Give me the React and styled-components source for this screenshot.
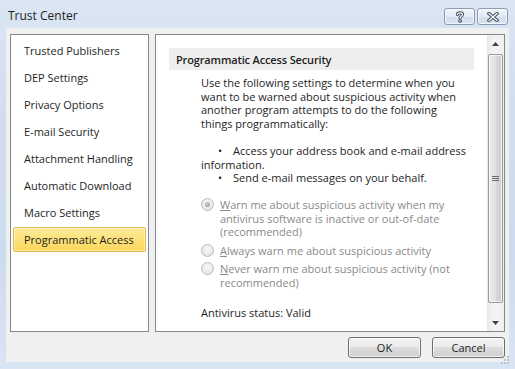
import React from 'react'
import styled, { createGlobalStyle } from 'styled-components'

const GlobalStyle = createGlobalStyle`
  html, body {
    margin: 0;
    padding: 0;
    background: #d3e0f0;
  }
  body {
    font-family: 'Open Sans', 'Noto Sans', sans-serif;
    font-size: 11px;
    color: #1e1e1e;
  }
`

const Window = styled.div`
  width: 515px;
  height: 369px;
  box-sizing: border-box;
  padding: 0 6px 7px 6px;
  display: flex;
  flex-direction: column;
  background: linear-gradient(180deg, #dae6f3 0%, #d1def0 30%, #cddbee 70%, #d9e5f3 100%);
`

const TitleBar = styled.div`
  height: 28px;
  display: flex;
  justify-content: space-between;
  align-items: flex-start;
  flex-shrink: 0;
`

const Title = styled.div`
  margin: 7px 0 0 2px;
  font-size: 12px;
  color: #1e1e1e;
`

const CaptionButtons = styled.div`
  display: flex;
  gap: 2px;
  margin: 8px 1px 0 0;
`

const CaptionButton = styled.div`
  width: 29px;
  height: 15px;
  border: 1px solid #8b9db5;
  border-radius: 3px;
  background: linear-gradient(180deg, #f1f5fa 0%, #e2eaf4 50%, #d2dded 51%, #dbe5f1 100%);
  box-shadow: inset 0 0 0 1px rgba(255, 255, 255, 0.6);
  display: flex;
  align-items: center;
  justify-content: center;
`

const Client = styled.div`
  flex: 1;
  background: #f0f0f0;
  display: flex;
  flex-direction: column;
  padding: 6px 4px 0 4px;
`

const Body = styled.div`
  display: flex;
  gap: 6px;
  height: 298px;
`

const Panel = styled.div`
  box-sizing: border-box;
  height: 100%;
  background: #ffffff;
  border: 1px solid #828790;
`

const Nav = styled(Panel)`
  width: 139px;
  padding: 3px 2px 0 2px;
  display: flex;
  flex-direction: column;
  gap: 2px;
`

const NavItem = styled.div`
  box-sizing: border-box;
  height: 25px;
  display: flex;
  align-items: center;
  padding-left: 10px;
  border: 1px solid ${p => (p.$active ? '#e3b94a' : 'transparent')};
  border-radius: 2px;
  background: ${p =>
    p.$active ? 'linear-gradient(180deg, #fdeb9c 0%, #fde27a 50%, #fbd65a 100%)' : 'transparent'};
  box-shadow: ${p => (p.$active ? 'inset 0 0 0 1px rgba(255,255,255,0.45)' : 'none')};
  color: #1e1e1e;
  white-space: nowrap;
`

const Content = styled(Panel)`
  flex: 1;
  display: flex;
`

const Scroll = styled.div`
  flex: 1;
  padding: 13px 13px 0 13px;
`

const SectionHeader = styled.div`
  height: 22px;
  background: #eeeeee;
  display: flex;
  align-items: center;
  padding-left: 7px;
  font-weight: 600;
  letter-spacing: -0.15px;
  color: #1e1e1e;
`

const SectionBody = styled.div`
  padding: 6px 0 0 32px;
  line-height: 13.5px;
  white-space: nowrap;
`

const Para = styled.p`
  margin: 0 0 ${p => p.$gap || 0}px 0;
  color: #1e1e1e;
`

const Bullet = styled.span`
  display: inline-block;
  margin-left: 17px;
  width: 15px;
`

const RadioRow = styled.div`
  display: flex;
  align-items: flex-start;
  gap: 6px;
  margin-bottom: ${p => p.$gap || 0}px;
  color: #8a8a8a;
`

const RadioCircle = styled.span`
  box-sizing: border-box;
  flex-shrink: 0;
  width: 13px;
  height: 13px;
  border-radius: 50%;
  border: 1px solid #bcbcbc;
  background: radial-gradient(circle at 50% 40%, #fafafa 0%, #e6e6e6 70%, #d9d9d9 100%);
  display: flex;
  align-items: center;
  justify-content: center;
  &::after {
    content: '';
    width: 5px;
    height: 5px;
    border-radius: 50%;
    background: ${p => (p.$checked ? 'radial-gradient(circle at 40% 35%, #d0d0d0, #8c8c8c)' : 'transparent')};
  }
`

const Status = styled.div`
  margin-top: 17px;
  color: #1e1e1e;
`

const ScrollBar = styled.div`
  width: 17px;
  display: flex;
  flex-direction: column;
  background: linear-gradient(90deg, #e8e8e8, #f4f4f4 40%, #f0f0f0);
`

const ScrollArrow = styled.div`
  height: 17px;
  display: flex;
  align-items: center;
  justify-content: center;
`

const Thumb = styled.div`
  flex: 1;
  margin: 2px 1px 11px 1px;
  border: 1px solid #9a9a9a;
  border-radius: 2px;
  background: linear-gradient(90deg, #ececec 0%, #e2e2e2 50%, #d6d6d6 51%, #d0d0d0 100%);
  box-shadow: inset 0 0 0 1px rgba(255, 255, 255, 0.7);
  display: flex;
  align-items: center;
  justify-content: center;
`

const Footer = styled.div`
  display: flex;
  justify-content: flex-end;
  gap: 11px;
  padding-top: 5px;
  position: relative;
`

const Button = styled.button`
  width: 73px;
  height: 21px;
  padding: 0;
  font-family: inherit;
  font-size: 11px;
  color: #1e1e1e;
  border: 1px solid #707070;
  border-radius: 3px;
  background: linear-gradient(180deg, #f2f2f2 0%, #ebebeb 49%, #dddddd 50%, #cfcfcf 100%);
  box-shadow: inset 0 0 0 1px rgba(255, 255, 255, 0.7);
`

const Grip = styled.svg`
  position: absolute;
  right: -4px;
  bottom: -6px;
`

const navItems = [
  'Trusted Publishers',
  'DEP Settings',
  'Privacy Options',
  'E-mail Security',
  'Attachment Handling',
  'Automatic Download',
  'Macro Settings',
  'Programmatic Access',
]

function HelpIcon() {
  return (
    <svg width="10" height="12" viewBox="0 0 10 12">
      <g fill="none" strokeLinecap="round">
        <path d="M2.5 3.5 C2.5 1.2 7.5 1.2 7.5 3.5 C7.5 5.3 5 5.3 5 7.3" stroke="#3b4a5e" strokeWidth="3" />
        <path d="M2.5 3.5 C2.5 1.2 7.5 1.2 7.5 3.5 C7.5 5.3 5 5.3 5 7.3" stroke="#ffffff" strokeWidth="1.2" />
        <circle cx="5" cy="10" r="1.4" fill="#ffffff" stroke="#3b4a5e" strokeWidth="1" />
      </g>
    </svg>
  )
}

function CloseIcon() {
  return (
    <svg width="12" height="10" viewBox="0 0 12 10">
      <path d="M2 1.5 L10 8.5 M10 1.5 L2 8.5" stroke="#3b4a5e" strokeWidth="3.2" strokeLinecap="square" />
      <path d="M2 1.5 L10 8.5 M10 1.5 L2 8.5" stroke="#ffffff" strokeWidth="1.3" strokeLinecap="square" />
    </svg>
  )
}

export default function App() {
  return (
    <>
      <GlobalStyle />
      <Window>
        <TitleBar>
          <Title>Trust Center</Title>
          <CaptionButtons>
            <CaptionButton>
              <HelpIcon />
            </CaptionButton>
            <CaptionButton>
              <CloseIcon />
            </CaptionButton>
          </CaptionButtons>
        </TitleBar>
        <Client>
          <Body>
            <Nav>
              {navItems.map(item => (
                <NavItem key={item} $active={item === 'Programmatic Access'}>
                  {item}
                </NavItem>
              ))}
            </Nav>
            <Content>
              <Scroll>
                <SectionHeader>Programmatic Access Security</SectionHeader>
                <SectionBody>
                  <Para $gap={14}>
                    Use the following settings to determine when you
                    <br />
                    want to be warned about suspicious activity when
                    <br />
                    another program attempts to do the following
                    <br />
                    things programmatically:
                  </Para>
                  <Para>
                    <Bullet>•</Bullet>Access your address book and e-mail address
                    <br />
                    information.
                  </Para>
                  <Para $gap={13.5}>
                    <Bullet>•</Bullet>Send e-mail messages on your behalf.
                  </Para>
                  <RadioRow $gap={5.5}>
                    <RadioCircle $checked />
                    <span>
                      <u>W</u>arn me about suspicious activity when my
                      <br />
                      antivirus software is inactive or out-of-date
                      <br />
                      (recommended)
                    </span>
                  </RadioRow>
                  <RadioRow $gap={4.5}>
                    <RadioCircle />
                    <span>
                      <u>A</u>lways warn me about suspicious activity
                    </span>
                  </RadioRow>
                  <RadioRow>
                    <RadioCircle />
                    <span>
                      <u>N</u>ever warn me about suspicious activity (not
                      <br />
                      recommended)
                    </span>
                  </RadioRow>
                  <Status>Antivirus status: Valid</Status>
                </SectionBody>
              </Scroll>
              <ScrollBar>
                <ScrollArrow>
                  <svg width="7" height="4" viewBox="0 0 7 4">
                    <path d="M0 4 L3.5 0 L7 4 Z" fill="#404040" />
                  </svg>
                </ScrollArrow>
                <Thumb>
                  <svg width="7" height="7" viewBox="0 0 7 7">
                    <path d="M0 1.5 H7 M0 3.5 H7 M0 5.5 H7" stroke="#6b6b6b" strokeWidth="1" />
                  </svg>
                </Thumb>
                <ScrollArrow>
                  <svg width="7" height="4" viewBox="0 0 7 4">
                    <path d="M0 0 L3.5 4 L7 0 Z" fill="#404040" />
                  </svg>
                </ScrollArrow>
              </ScrollBar>
            </Content>
          </Body>
          <Footer>
            <Button>OK</Button>
            <Button>Cancel</Button>
            <Grip width="10" height="10" viewBox="0 0 10 10">
              <g fill="#b8c4d2">
                <rect x="8" y="2" width="2" height="2" />
                <rect x="5" y="5" width="2" height="2" />
                <rect x="8" y="5" width="2" height="2" />
                <rect x="2" y="8" width="2" height="2" />
                <rect x="5" y="8" width="2" height="2" />
                <rect x="8" y="8" width="2" height="2" />
              </g>
            </Grip>
          </Footer>
        </Client>
      </Window>
    </>
  )
}
